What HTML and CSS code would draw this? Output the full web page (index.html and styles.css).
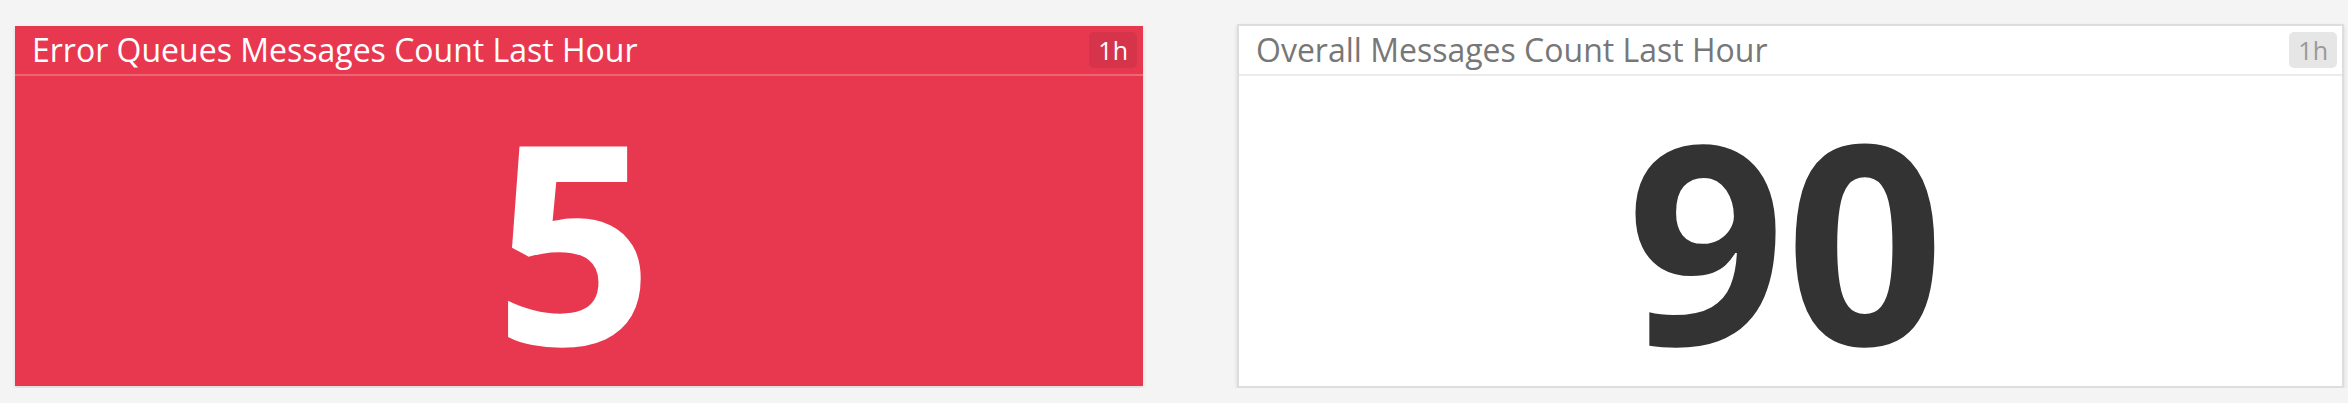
FILE: index.html
```html
<!DOCTYPE html>
<html>
<head>
<meta charset="utf-8">
<link rel="stylesheet" href="styles.css">
</head>
<body>
<div class="row">
  <div class="widget widget-error">
    <div class="widget-head">
      <span class="widget-title">Error Queues Messages Count Last Hour</span>
      <span class="badge">1h</span>
    </div>
    <div class="widget-body">5</div>
  </div>
  <div class="widget widget-plain">
    <div class="widget-head">
      <span class="widget-title">Overall Messages Count Last Hour</span>
      <span class="badge">1h</span>
    </div>
    <div class="widget-body">90</div>
  </div>
</div>
</body>
</html>
```
FILE: styles.css
```css
html, body {
  margin: 0;
  padding: 0;
}
body {
  background: #f4f4f4;
  font-family: "Open Sans", "Liberation Sans", sans-serif;
  overflow: hidden;
}
.row {
  display: flex;
  align-items: flex-start;
  padding: 24px 0 0 15px;
  gap: 94px;
}
.widget {
  box-sizing: border-box;
  display: flex;
  flex-direction: column;
  box-shadow: 0 2px 4px rgba(0, 0, 0, 0.12);
  overflow: hidden;
}
.widget-error {
  width: 1128px;
  height: 360px;
  margin-top: 2px;
  background: #e8384f;
  color: #fff;
}
.widget-plain {
  width: 1107px;
  height: 364px;
  background: #fff;
  border: 2px solid #dddddd;
  color: #333;
}
.widget-head {
  display: flex;
  align-items: center;
  justify-content: space-between;
  gap: 12px;
  height: 48px;
  flex: none;
  padding: 0 6px 0 17px;
  border-bottom: 2px solid #ee6676;
}
.widget-plain .widget-head {
  padding-right: 5px;
  border-bottom-color: #ebebeb;
}
.widget-title {
  font-size: 32px;
  line-height: 40px;
  white-space: nowrap;
}
.widget-plain .widget-title {
  color: #777;
}
.badge {
  height: 36px;
  line-height: 36px;
  padding: 0 9px;
  border-radius: 5px;
  font-size: 25px;
  background: #d5344a;
  color: #fff;
}
.widget-plain .badge {
  background: #e6e6e6;
  color: #999;
}
.widget-body {
  flex: 1;
  min-height: 0;
  text-align: center;
  font-weight: 700;
  font-size: 278px;
  line-height: 1;
  padding: 22px 10px 0 0;
  overflow: hidden;
}
.widget-plain .widget-body {
  color: #333;
}
```
